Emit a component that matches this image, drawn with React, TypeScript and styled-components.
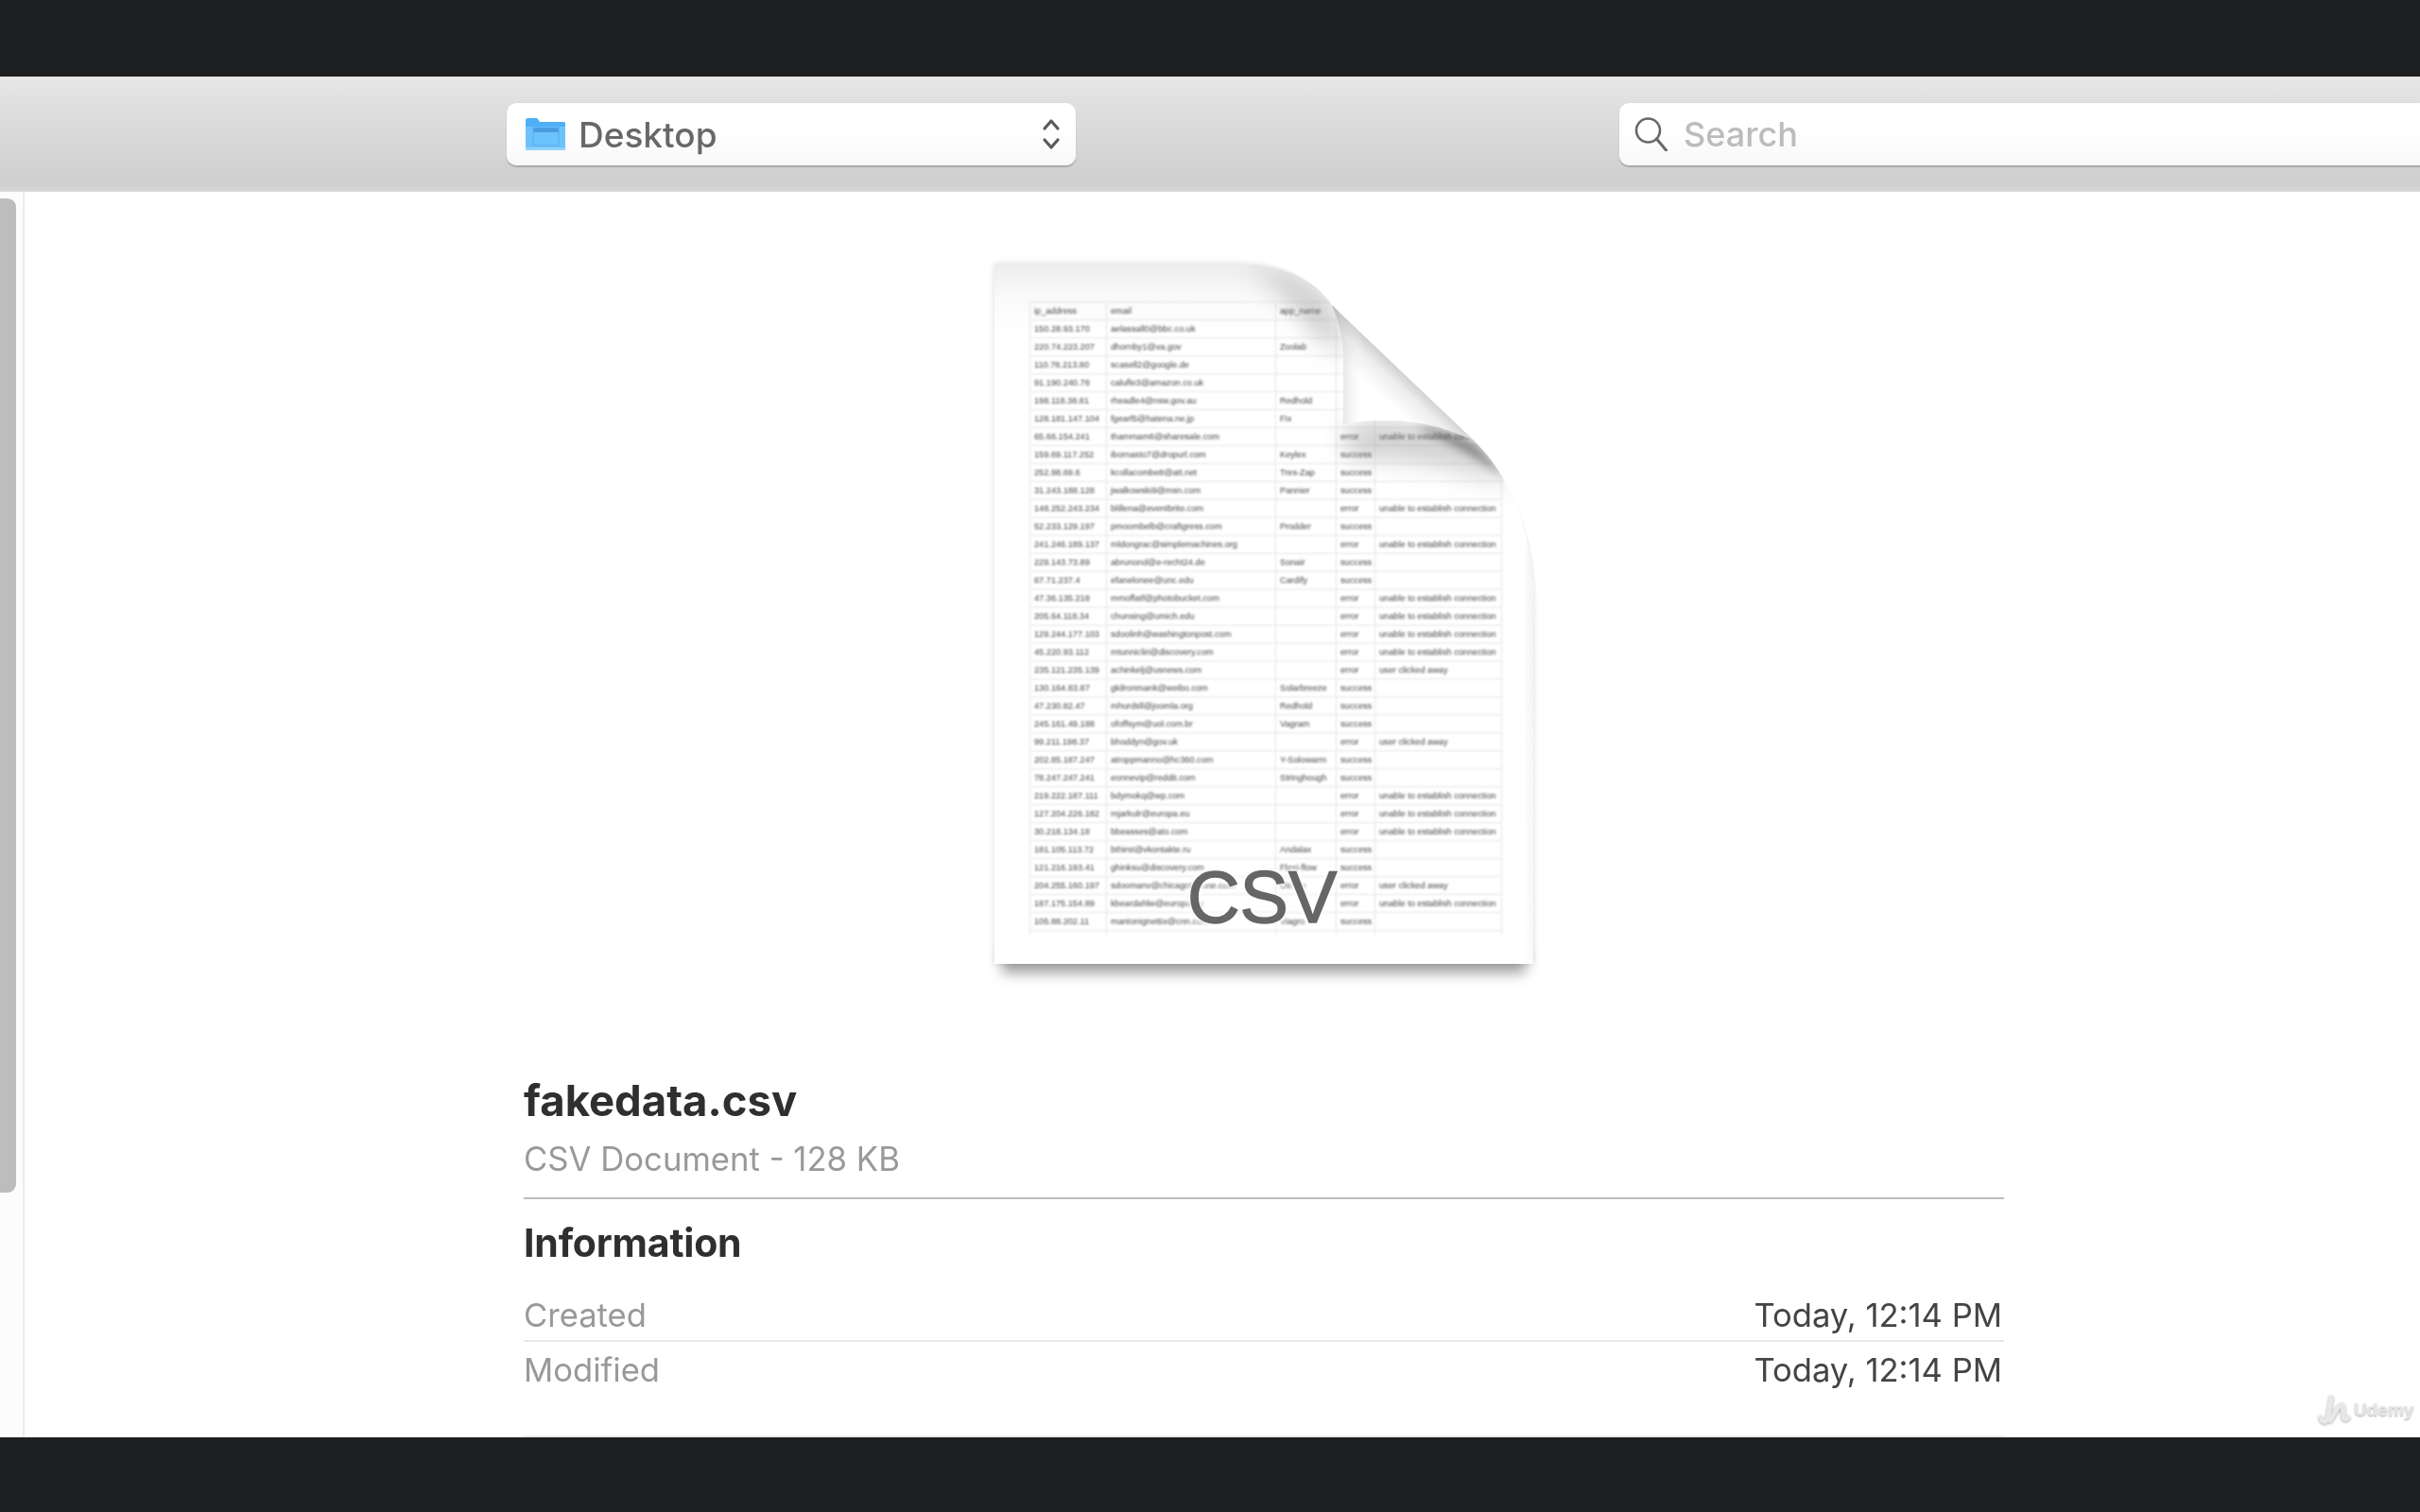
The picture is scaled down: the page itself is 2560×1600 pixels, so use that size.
import React from "react";
import styled, { createGlobalStyle } from "styled-components";

const Global = createGlobalStyle`
  html, body { margin: 0; padding: 0; background: #1d1e20; }
  body { width: 2560px; height: 1600px; overflow: hidden; }
`;

const UI = `Inter, "Liberation Sans", sans-serif`;

const Page = styled.div`
  width: 2560px;
  height: 1600px;
  display: flex;
  flex-direction: column;
  overflow: hidden;
  position: relative;
  background: #1d1e20;
  font-family: ${UI};
  filter: blur(0.7px);
`;
const Letterbox = styled.div<{ $h: number }>`
  height: ${(p) => p.$h}px;
  flex: none;
  background: #1d1e20;
`;
const Toolbar = styled.div`
  height: 122px;
  flex: none;
  box-sizing: border-box;
  display: flex;
  align-items: flex-start;
  padding: 28px 0 0 536px;
  background: linear-gradient(#e6e6e6, #dedede 30%, #cfcfcf 92%, #d6d6d6);
  border-bottom: 1px solid #dcdcdc;
`;
const Field = styled.div`
  height: 66px;
  box-sizing: border-box;
  display: flex;
  align-items: center;
  background: linear-gradient(#ffffff 40%, #f8f8f8);
  border-radius: 10px;
  box-shadow: 0 2px 1px #a9a9a9, 0 0 1px #bbb;
`;
const PathControl = styled(Field)`
  width: 602px;
  padding: 0 14px 0 19px;
  flex: none;
`;
const SearchField = styled(Field)`
  width: 1000px;
  flex: none;
  margin-left: 575px;
  padding-left: 15px;
  border-radius: 10px 0 0 10px;
`;
const PathLabel = styled.span`
  margin-left: 13px;
  font-size: 37px;
  font-weight: 500;
  color: #686868;
  flex: 1;
`;
const SearchLabel = styled.span`
  margin-left: 15px;
  font-size: 36px;
  font-weight: 500;
  color: #bcbcbc;
`;
const Body = styled.div`
  flex: 1;
  display: flex;
  min-height: 0;
  background: #fff;
`;
const Rail = styled.div`
  width: 24px;
  flex: none;
  box-sizing: content-box;
  background: #fcfcfc;
  border-right: 2px solid #ececec;
  padding-top: 7px;
`;
const Thumb = styled.div`
  width: 17px;
  height: 1052px;
  background: #bdbdbd;
  border-radius: 0 9px 9px 0;
`;
const Content = styled.div`
  width: 1566px;
  margin-left: 528px;
  display: flex;
  flex-direction: column;
`;
const DocIcon = styled.div`
  position: relative;
  width: 570px;
  height: 741px;
  margin: 76px 0 0 498px;
  flex: none;
`;
const DocLayer = styled.svg`
  position: absolute;
  left: -30px;
  top: -10px;
  width: 630px;
  height: 790px;
`;
const Sheet = styled.table`
  position: absolute;
  left: 37px;
  top: 40px;
  width: 499px;
  table-layout: fixed;
  border-collapse: collapse;
  font-family: "Liberation Sans", sans-serif;
  font-size: 9.2px;
  color: #444;
  filter: blur(1.1px);
`;
const Cell = styled.td<{ $stub?: boolean }>`
  height: ${(p) => (p.$stub ? 4 : 19)}px;
  box-sizing: border-box;
  padding: 0 0 0 4px;
  border: 1.4px solid #e4e4e4;
  border-bottom: ${(p) => (p.$stub ? "none" : "1.4px solid #e4e4e4")};
  white-space: nowrap;
  overflow: hidden;
`;
const KindLabel = styled.div`
  position: absolute;
  left: 204px;
  top: 622px;
  font-family: "Liberation Sans", sans-serif;
  font-size: 77px;
  line-height: 96px;
  color: #666;
  -webkit-text-stroke: 1.4px #666;
  text-shadow: 0 0 5px #fff, 0 0 5px #fff, 0 0 8px #fff, 0 0 8px #fff;
`;
const FileName = styled.div`
  margin-top: 117px;
  font-size: 45.5px;
  line-height: 56px;
  font-weight: 700;
  color: #2f2f2f;
`;
const FileKind = styled.div`
  margin-top: 11px;
  padding-bottom: 19px;
  font-size: 34.7px;
  line-height: 44px;
  color: #999;
  border-bottom: 2px solid #bcbcbc;
`;
const SectionTitle = styled.div`
  margin-top: 23px;
  font-size: 41px;
  line-height: 46px;
  font-weight: 700;
  letter-spacing: -0.2px;
  color: #2f2f2f;
`;
const InfoList = styled.div`
  margin-top: 24px;
  border-bottom: 2px solid #ececec;
`;
const InfoRow = styled.div<{ $last?: boolean }>`
  height: ${(p) => (p.$last ? 99 : 58)}px;
  box-sizing: border-box;
  display: flex;
  justify-content: space-between;
  align-items: flex-start;
  padding-top: 8px;
  font-size: 34.6px;
  line-height: 42px;
  border-bottom: ${(p) => (p.$last ? "none" : "2px solid #e8e8e8")};
`;
const InfoKey = styled.span`
  color: #999;
`;
const InfoValue = styled.span`
  color: #444;
  margin-right: 2px;
`;
const Watermark = styled.div`
  position: absolute;
  left: 2450px;
  top: 1476px;
  display: flex;
  align-items: center;
  gap: 4px;
  color: #e6e6e6;
  font-family: "Liberation Sans", sans-serif;
  font-size: 19px;
  font-weight: 700;
  text-shadow: 0 1px 2px #aaa;
`;

const FolderIcon = () => (
  <svg width="44" height="36" viewBox="0 0 44 36">
    <path d="M1 4a3 3 0 0 1 3-3h9l3 4h25a2 2 0 0 1 2 2v26a2 2 0 0 1-2 2H3a2 2 0 0 1-2-2z" fill="#6cc2fc" />
    <path d="M1 4a3 3 0 0 1 3-3h9l3 4h25a2 2 0 0 1 2 2v3H1z" fill="#4fb0f5" />
    <rect x="9" y="11" width="27" height="5" fill="#4a9ce0" />
    <rect x="9" y="11" width="27" height="19" fill="none" stroke="#55aef0" strokeWidth="1" />
    <rect x="1" y="32" width="42" height="3" fill="#8ed2fb" />
  </svg>
);

const Stepper = () => (
  <svg width="24" height="36" viewBox="0 0 24 36" fill="none" stroke="#5a5a5a" strokeWidth="3.2" strokeLinecap="round" strokeLinejoin="round">
    <path d="M5 12l7-8 7 8" />
    <path d="M5 24l7 8 7-8" />
  </svg>
);

const SearchGlass = () => (
  <svg width="38" height="36" viewBox="0 0 38 36" fill="none" stroke="#686868" strokeWidth="2.6" strokeLinecap="round">
    <circle cx="15.5" cy="14" r="12.5" />
    <path d="M24.5 23l10 12" strokeWidth="3" />
  </svg>
);

const UdemyMark = () => (
  <svg width="36" height="32" viewBox="0 0 36 32" fill="none" stroke="#e8e8e8" strokeWidth="5" strokeLinecap="round" style={{ filter: "drop-shadow(0 1px 1.5px #aaa)" }}>
    <path d="M5 24c2 6 7 6 8-2l3-19" />
    <path d="M15 27c4-7 9-16 12-16 3 0 1 8 2 12s3 3 5 1" />
  </svg>
);

const PAGE = "M0 0L255 0C300 0 338 14 357 44L508 188C545 225 570 280 570 360L570 741L0 741Z";
const FLAP = "M357 44C364 60 369 78 369 100L369 170C420 160 470 168 508 188Z";
const CUT = "M357 44C338 14 300 0 275 -4L575 -4L575 360C570 280 545 225 508 188C470 168 420 160 369 170L369 100C369 78 364 60 357 44Z";

const PageBack = () => (
  <DocLayer viewBox="-30 -10 630 790">
    <defs>
      <linearGradient id="topShade" x1="0" y1="0" x2="0" y2="1">
        <stop offset="0" stopColor="#ededed" />
        <stop offset="0.05" stopColor="#fafafa" />
        <stop offset="0.1" stopColor="#fff" />
      </linearGradient>
      <filter id="dropS" x="-10%" y="-60%" width="120%" height="260%">
        <feDropShadow dx="0" dy="10" stdDeviation="7" floodColor="#000" floodOpacity="0.36" />
      </filter>
      <filter id="sideS" x="-10%" y="-10%" width="120%" height="120%">
        <feDropShadow dx="0" dy="0" stdDeviation="3" floodColor="#000" floodOpacity="0.14" />
      </filter>
    </defs>
    <rect x="8" y="715" width="554" height="26" fill="#fff" filter="url(#dropS)" />
    <path d={PAGE} fill="url(#topShade)" filter="url(#sideS)" />
  </DocLayer>
);

const PageCurl = () => (
  <DocLayer viewBox="-30 -10 630 790">
    <defs>
      <clipPath id="pageClip"><path d={PAGE} /></clipPath>
      <filter id="soft" x="-30%" y="-30%" width="160%" height="160%"><feGaussianBlur stdDeviation="13" /></filter>
      <filter id="softer" x="-30%" y="-30%" width="160%" height="160%"><feGaussianBlur stdDeviation="5" /></filter>
      <linearGradient id="flapFill" gradientUnits="userSpaceOnUse" x1="433" y1="116" x2="378" y2="176">
        <stop offset="0" stopColor="#cfcfcf" />
        <stop offset="0.16" stopColor="#ededed" />
        <stop offset="0.42" stopColor="#fff" />
        <stop offset="1" stopColor="#fff" />
      </linearGradient>
      <linearGradient id="flapTop" gradientUnits="userSpaceOnUse" x1="352" y1="70" x2="392" y2="70">
        <stop offset="0" stopColor="#9a9a9a" stopOpacity="0.7" />
        <stop offset="1" stopColor="#fff" stopOpacity="0" />
      </linearGradient>
    </defs>
    <path d={CUT} fill="#fff" />
    <g clipPath="url(#pageClip)">
      <path d="M372 172C420 162 470 170 508 190C522 204 534 218 544 236C500 214 430 205 372 205Z" fill="#888" opacity="0.4" filter="url(#soft)" />
      <path d="M445 172C470 174 490 180 508 190C525 206 534 218 540 228C510 204 480 190 445 172Z" fill="#555" opacity="0.6" filter="url(#softer)" />
      <path d="M270 4C310 8 340 26 357 44L372 100L335 70C320 45 300 25 270 4Z" fill="#8a8a8a" opacity="0.45" filter="url(#soft)" />
      <path d="M564 300L574 300L574 741L568 741Z" fill="#dcdcdc" opacity="0.4" filter="url(#softer)" />
    </g>
    <path d={FLAP} fill="url(#flapFill)" />
    <path d={FLAP} fill="url(#flapTop)" />
  </DocLayer>
);

type Row = [string, string, string, string, string];
const E = "unable to establish connection";
const U = "user clicked away";
const rows: Row[] = [
  ["ip_address", "email", "app_name", "", ""],
  ["150.28.93.170", "aelassall0@bbc.co.uk", "", "", ""],
  ["220.74.223.207", "dhornby1@va.gov", "Zoolab", "", ""],
  ["110.78.213.80", "scasell2@google.de", "", "", ""],
  ["91.190.240.78", "calufle3@amazon.co.uk", "", "", ""],
  ["198.118.38.81", "rheadle4@nsw.gov.au", "Redhold", "", ""],
  ["128.181.147.104", "fgearl5@hatena.ne.jp", "Fix", "", ""],
  ["65.66.154.241", "thammam6@sharesale.com", "", "error", E],
  ["159.69.117.252", "ibornasto7@dropurl.com", "Keylex", "success", ""],
  ["252.98.69.6", "kcollacombe8@att.net", "Tres-Zap", "success", ""],
  ["31.243.188.128", "jwalkowski9@msn.com", "Pannier", "success", ""],
  ["148.252.243.234", "blillena@eventbrite.com", "", "error", E],
  ["52.233.129.197", "pmoombelb@craftgress.com", "Prodder", "success", ""],
  ["241.246.189.137", "mldongrac@simplemachines.org", "", "error", E],
  ["229.143.73.89", "abrunond@e-recht24.de", "Sonair", "success", ""],
  ["67.71.237.4", "efanelonee@unc.edu", "Cardify", "success", ""],
  ["47.36.135.218", "mmoffatf@photobucket.com", "", "error", E],
  ["205.64.118.34", "chunsing@umich.edu", "", "error", E],
  ["129.244.177.103", "sdoolinh@washingtonpost.com", "", "error", E],
  ["45.220.93.112", "mtunnicliri@discovery.com", "", "error", E],
  ["235.121.235.139", "achinkelj@usnews.com", "", "error", U],
  ["130.164.83.87", "gkilronmank@weibo.com", "Solarbreeze", "success", ""],
  ["47.230.82.47", "mhurdsll@joomla.org", "Redhold", "success", ""],
  ["245.161.49.188", "ofoffsym@uol.com.br", "Vagram", "success", ""],
  ["99.211.198.37", "bhoddyn@gov.uk", "", "error", U],
  ["202.85.187.247", "atroppmanno@hc360.com", "Y-Solowarm", "success", ""],
  ["78.247.247.241", "eonnevip@reddit.com", "Stringhough", "success", ""],
  ["219.222.187.111", "bdymokq@wp.com", "", "error", E],
  ["127.204.226.182", "mjarkulr@europa.eu", "", "error", E],
  ["30.218.134.18", "bbeasses@ato.com", "", "error", E],
  ["181.105.113.72", "bthirst@vkontakte.ru", "Andalax", "success", ""],
  ["121.216.193.41", "ghinksu@discovery.com", "Flexi-flow", "success", ""],
  ["204.255.160.197", "sdoomanv@chicagotribune.com", "Otcom", "error", U],
  ["187.175.154.89", "kbeardahlw@europa.eu", "", "error", E],
  ["105.88.202.11", "mantonignettix@cnn.com", "Viagro", "success", ""],
];
const widths = [81, 179, 64, 41, 134];

export default function App() {
  return (
    <Page>
      <Global />
      <Letterbox $h={81} />
      <Toolbar>
        <PathControl>
          <FolderIcon />
          <PathLabel>Desktop</PathLabel>
          <Stepper />
        </PathControl>
        <SearchField>
          <SearchGlass />
          <SearchLabel>Search</SearchLabel>
        </SearchField>
      </Toolbar>
      <Body>
        <Rail><Thumb /></Rail>
        <Content>
          <DocIcon>
            <PageBack />
            <Sheet>
              <colgroup>{widths.map((w, i) => <col key={i} width={w} />)}</colgroup>
              <tbody>
                {rows.map((r, i) => (
                  <tr key={i}>{r.map((c, j) => <Cell key={j}>{c}</Cell>)}</tr>
                ))}
                <tr>{widths.map((w) => <Cell key={w} $stub />)}</tr>
              </tbody>
            </Sheet>
            <PageCurl />
            <KindLabel>CSV</KindLabel>
          </DocIcon>
          <FileName>fakedata.csv</FileName>
          <FileKind>CSV Document - 128 KB</FileKind>
          <SectionTitle>Information</SectionTitle>
          <InfoList>
            <InfoRow><InfoKey>Created</InfoKey><InfoValue>Today, 12:14 PM</InfoValue></InfoRow>
            <InfoRow $last><InfoKey>Modified</InfoKey><InfoValue>Today, 12:14 PM</InfoValue></InfoRow>
          </InfoList>
        </Content>
      </Body>
      <Letterbox $h={79} />
      <Watermark><UdemyMark />Udemy</Watermark>
    </Page>
  );
}
